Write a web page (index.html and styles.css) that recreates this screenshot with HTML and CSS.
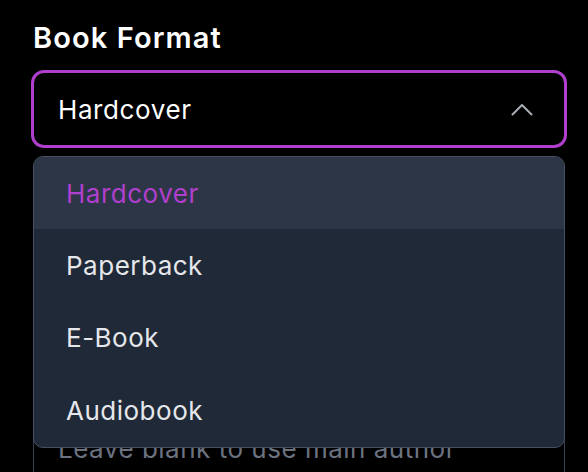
FILE: index.html
```html
<!DOCTYPE html>
<html lang="en">
<head>
<meta charset="utf-8">
<title>Book Format</title>
<link rel="stylesheet" href="styles.css">
</head>
<body>
<div class="page">
  <div class="field">
    <label class="label">Book Format</label>
    <div class="select-wrap">
      <div class="select">
        <span class="select-value">Hardcover</span>
        <svg class="chevron" width="22" height="13" viewBox="0 0 22 13" aria-hidden="true">
          <polyline points="1.5,11.5 11,2 20.5,11.5" fill="none" stroke="#a8adb5" stroke-width="2" stroke-linecap="round" stroke-linejoin="round"/>
        </svg>
      </div>
      <ul class="menu">
        <li class="option active">Hardcover</li>
        <li class="option">Paperback</li>
        <li class="option">E-Book</li>
        <li class="option">Audiobook</li>
      </ul>
    </div>
  </div>
  <div class="field next">
    <input class="input" type="text" placeholder="Leave blank to use main author">
  </div>
</div>
</body>
</html>
```
FILE: styles.css
```css
html, body {
  margin: 0;
  padding: 0;
  background: #000;
}
body {
  font-family: Inter, "Noto Sans", sans-serif;
  color: #fff;
}
.page {
  width: 532px;
  padding: 19px 0 0 33px;
}
.field {
  display: flex;
  flex-direction: column;
}
.label {
  font-size: 29px;
  font-weight: 600;
  letter-spacing: 1.1px;
  line-height: 38px;
  color: #fff;
  margin-bottom: 13px;
}
.select-wrap {
  position: relative;
}
.select {
  box-sizing: border-box;
  height: 78px;
  margin: 0 -2px;
  border: 3px solid #b13fcd;
  border-radius: 13px;
  padding: 0 31px 0 24px;
  display: flex;
  align-items: center;
  justify-content: space-between;
}
.select-value {
  font-size: 26px;
  letter-spacing: 0.6px;
  color: #fff;
}
.chevron {
  display: block;
}
.menu {
  position: absolute;
  top: calc(100% + 8px);
  left: 0;
  right: 0;
  margin: 0;
  padding: 0;
  list-style: none;
  background: #1f2937;
  border: 1px solid #465062;
  border-radius: 10px;
  overflow: hidden;
  z-index: 2;
}
.option {
  height: 72px;
  display: flex;
  align-items: center;
  padding: 1px 0 0 32px;
  box-sizing: border-box;
  font-size: 26px;
  letter-spacing: 0.5px;
  color: #e5e7eb;
}
.option:last-child {
  height: 74px;
}
.option.active {
  background: #2d3646;
  color: #b13fcd;
}
.next {
  margin-top: 262px;
}
.input {
  box-sizing: border-box;
  height: 76px;
  border: 1px solid #374151;
  border-radius: 10px;
  background: #000;
  padding: 0 24px;
  font-family: Inter, "Noto Sans", sans-serif;
  font-size: 26px;
  letter-spacing: 0.5px;
  color: #fff;
  outline: none;
}
.input::placeholder {
  color: #6b7280;
}
```
